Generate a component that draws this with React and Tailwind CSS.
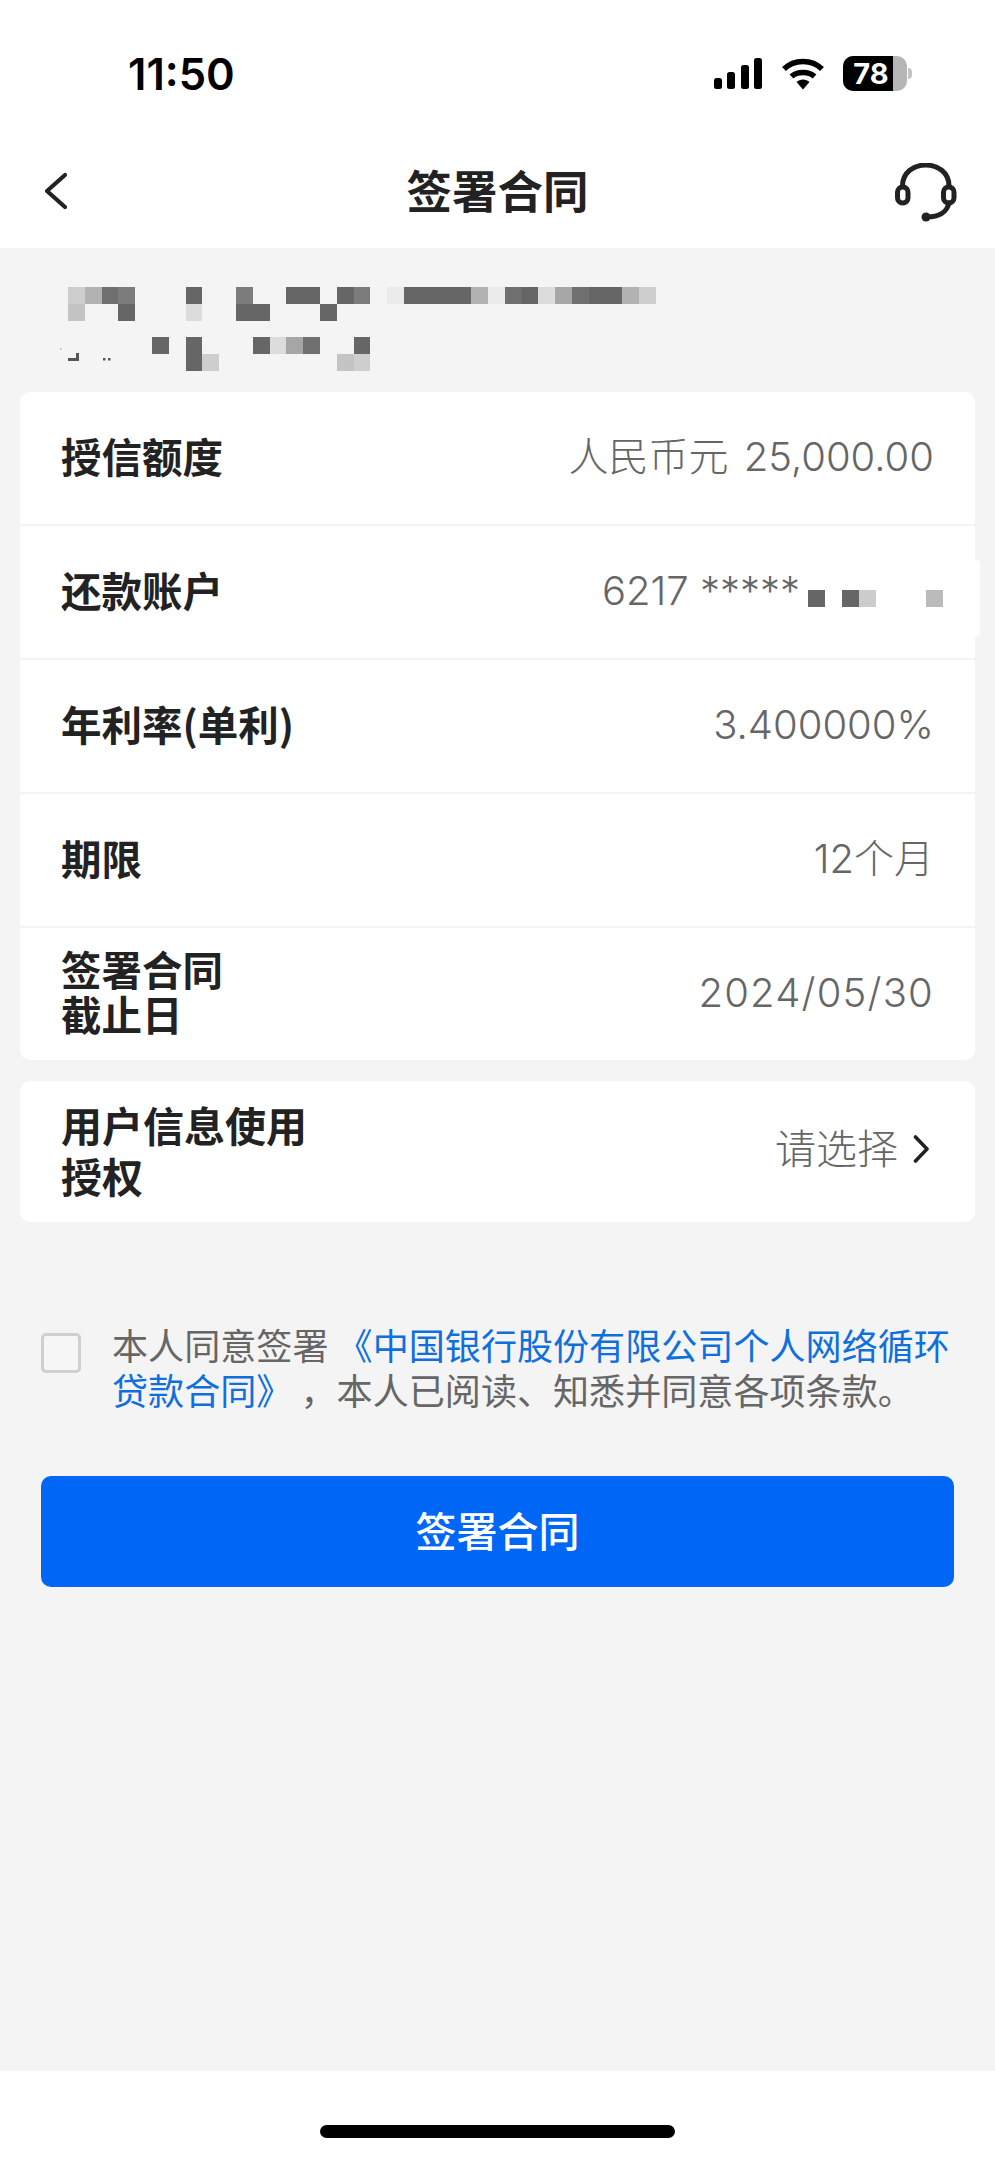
import React from 'react';

const CJK = '"Noto Sans CJK SC", sans-serif';

// pixelated (blurred out) name above the cards
const SHADES = {
  a: 'bg-[#666666]',
  b: 'bg-[#6f6f6f]',
  c: 'bg-[#7c7c7c]',
  d: 'bg-[#a6a6a6]',
  e: 'bg-[#b2b2b2]',
  f: 'bg-[#c4c4c4]',
  g: 'bg-[#cecece]',
  h: 'bg-[#dcdcdc]',
  i: 'bg-[#ebebeb]',
};
const MOSAIC_TOP = [
  'gebc...a..c..aa.ac.iaaaaeibahdbaaeg',
  'f..a...h..aa...a',
];
const MOSAIC_BOTTOM = [
  '.....a.a...ahdb..a',
  '.......ag.......fg',
];

const MosaicRow = ({ cells }) => (
  <div className="flex h-[17px]">
    {cells.split('').map((c, i) => (
      <div key={i} className={`h-[17px] w-[16.8px] shrink-0 ${SHADES[c] || ''}`} />
    ))}
  </div>
);

const Row = ({ label, children, last }) => (
  <div className={`flex items-center justify-between pl-[41px] pr-[41px] ${last ? 'h-[132px]' : 'h-[134px] border-b-2 border-[#f4f4f4]'}`}>
    <div className="pb-[6px] text-[40.5px] font-bold leading-[45px] text-[#222222]">{label}</div>
    {children}
  </div>
);

const Value = ({ children, className = '' }) => (
  <div className={`pb-[3px] text-[40px] font-light text-[#666666] ${className}`} style={{ fontFamily: '"Inter", "Noto Sans CJK SC", sans-serif' }}>
    {children}
  </div>
);

const App = () => {
  return (
    <div className="flex min-h-[2157px] flex-col bg-[#f4f4f4]" style={{ fontFamily: CJK }}>
      {/* status bar + nav */}
      <header className="h-[248px] bg-white">
        <div className="flex h-[134px] items-start justify-between pl-[128px] pr-[83px] pt-[48px]">
          <span className="text-[43.5px] font-semibold leading-[52px] text-black" style={{ fontFamily: '"Inter", sans-serif' }}>11:50</span>
          <div className="flex items-center pt-[8px]">
            <svg width="49" height="32" viewBox="0 0 49 32" fill="#000">
              <rect x="0" y="20" width="8" height="11" rx="2.5" />
              <rect x="13" y="14" width="8" height="17" rx="2.5" />
              <rect x="27" y="7" width="8" height="24" rx="2.5" />
              <rect x="40" y="0" width="8" height="31" rx="2.5" />
            </svg>
            <svg className="ml-[19px]" width="42" height="32" viewBox="0 0 42 32">
              <path d="M2 11 C12 1 30 1 40 11" fill="none" stroke="#000" strokeWidth="5.5" />
              <path d="M9.5 18.5 C15 13 27 13 32.5 18.5" fill="none" stroke="#000" strokeWidth="5.5" />
              <path d="M14.5 24 C18 20.5 24 20.5 27.5 24 L21 31.5 Z" fill="#000" />
            </svg>
            <div className="ml-[19px] flex h-[35px] w-[64px] overflow-hidden rounded-[10px] bg-[#b5b5b5]">
              <div className="flex h-full w-[50px] items-center justify-center bg-black pl-[6px] text-[29px] font-bold leading-none text-white" style={{ fontFamily: '"Inter", sans-serif' }}>78</div>
            </div>
            <div className="ml-[1px] h-[11px] w-[4px] rounded-r-full bg-[#c4c4c4]" />
          </div>
        </div>
        <div className="flex h-[114px] items-center px-[38px]">
          <div className="flex flex-1 justify-start">
            <svg className="ml-[6px]" width="24" height="38" viewBox="0 0 24 38" fill="none" stroke="#222" strokeWidth="4.2" strokeLinecap="round" strokeLinejoin="round">
              <path d="M21 3 L3 19 L21 35" />
            </svg>
          </div>
          <h1 className="pb-[3px] text-[45.5px] font-bold leading-none text-[#222222]">签署合同</h1>
          <div className="flex flex-1 justify-end">
            <svg className="mt-[3px]" width="62" height="60" viewBox="0 0 62 60" fill="none" stroke="#222" strokeWidth="5">
              <path d="M7.5 23 C7.5 -5 54 -5 54 23" />
              <rect x="2.5" y="24" width="10.5" height="16" rx="5.2" />
              <rect x="48.5" y="24" width="10.5" height="16" rx="5.2" />
              <path d="M54 40 C52 49 44 54 32 54" strokeLinecap="round" />
              <circle cx="31" cy="54" r="4.5" fill="#222" stroke="none" />
            </svg>
          </div>
        </div>
      </header>

      <main className="flex-1">
        <div className="pl-[68px] pt-[39px]">
          {MOSAIC_TOP.map((r, i) => <MosaicRow key={i} cells={r} />)}
          <div className="relative mt-[16px]">
            {MOSAIC_BOTTOM.map((r, i) => <MosaicRow key={i} cells={r} />)}
            <svg className="absolute -left-[8px] top-0" width="56" height="26" viewBox="0 0 56 26" fill="#555">
              <rect x="0" y="11" width="1.5" height="1.5" fill="#aaa" />
              <path d="M8 21 H16 V16 H19 V24 H8 Z" />
              <rect x="43" y="21" width="2.5" height="2.5" />
              <rect x="48" y="21" width="2.5" height="2.5" />
            </svg>
          </div>
        </div>

        <section className="mx-[20px] mt-[21px] rounded-[10px] bg-white">
          <Row label="授信额度">
            <Value>人民币元<span className="ml-[4px]"> 25,000.00</span></Value>
          </Row>
          <div className="relative">
            <Row label="还款账户">
              <div className="-mr-[9px] flex items-center">
                <Value>6217 *****</Value>
                <div className="ml-[8px] mt-[13px] flex">
                  <div className="h-[17px] w-[17px] bg-[#666666]" />
                  <div className="ml-[17px] h-[17px] w-[17px] bg-[#666666]" />
                  <div className="h-[17px] w-[17px] bg-[#cccccc]" />
                  <div className="ml-[50px] h-[17px] w-[17px] bg-[#bbbbbb]" />
                </div>
              </div>
            </Row>
            <div className="absolute -right-[5px] top-[34px] h-[77px] w-[5px] rounded-r-[4px] bg-white" />
          </div>
          <Row label="年利率(单利)"><Value>3.400000%</Value></Row>
          <Row label="期限"><Value>12个月</Value></Row>
          <Row label={<>签署合同<br />截止日</>} last><Value className="tracking-[1.2px]">2024/05/30</Value></Row>
        </section>

        <section className="mx-[20px] mt-[21px] flex h-[141px] items-center justify-between rounded-[10px] bg-white pl-[41px] pr-[46px]">
          <div className="pb-[4px] text-[41px] font-bold leading-[51px] text-[#222222]">用户信息使用<br />授权</div>
          <div className="flex items-center">
            <span className="pb-[10px] text-[41px] font-light text-[#666666]">请选择</span>
            <svg className="mb-[6px] ml-[15px]" width="16" height="28" viewBox="0 0 16 28" fill="none" stroke="#222" strokeWidth="3.6" strokeLinecap="round" strokeLinejoin="round">
              <path d="M2.5 2 L14 14 L2.5 26" />
            </svg>
          </div>
        </section>

        <div className="mt-[100px] flex pl-[41px] pr-[30px]">
          <div className="mt-[11px] h-[40px] w-[40px] shrink-0 rounded-[5px] border-[3px] border-[#cfcfcf] bg-[#f6f6f6]" />
          <p className="ml-[31px] text-[36.1px] font-normal leading-[45px] text-[#666666]">
            本人同意签署 <span className="text-[#0f6fdc]">《中国银行股份有限公司个人网络循环贷款合同》</span> ，本人已阅读、知悉并同意各项条款。
          </p>
        </div>

        <button className="mx-[41px] mt-[64px] flex h-[111px] w-[913px] items-center justify-center rounded-[10px] bg-[#0066f5] pb-[3px] text-[41px] font-medium text-white">
          签署合同
        </button>
      </main>

      <footer className="flex h-[86px] items-start justify-center bg-white pt-[54px]">
        <div className="h-[13px] w-[355px] rounded-full bg-black" />
      </footer>
    </div>
  );
};

export default App;
